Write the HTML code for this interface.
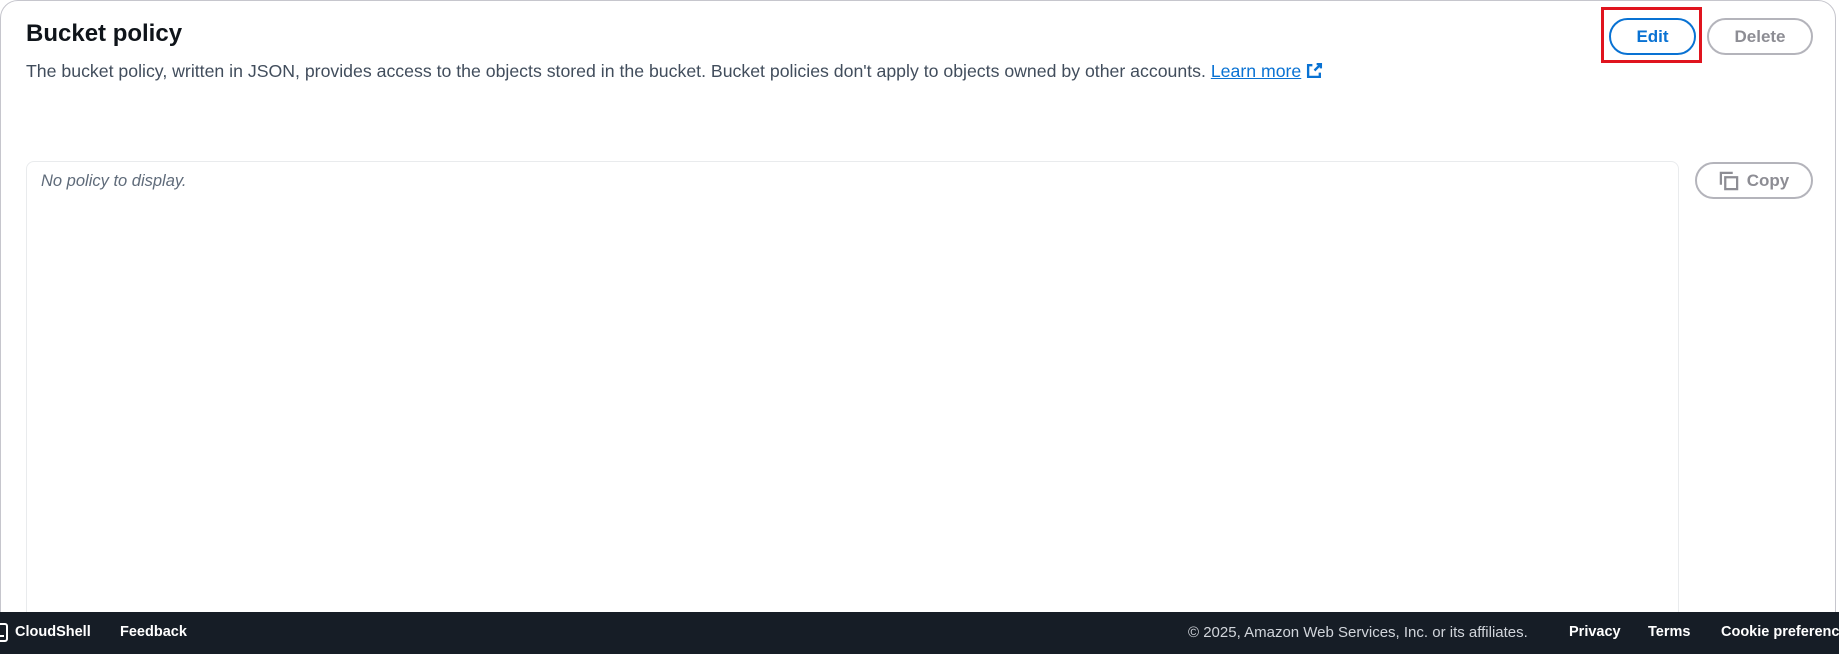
<!DOCTYPE html>
<html style="overflow:hidden;height:654px"><head><meta charset="utf-8"><style>
*{box-sizing:border-box;margin:0;padding:0}
body{width:1839px;height:654px;overflow:hidden;background:#fff;font-family:"Liberation Sans",sans-serif;position:relative;color:#16191f}
.card{position:absolute;left:0;top:0;width:1836px;height:680px;border:1px solid #c6c6cd;border-radius:18px}
h1{position:absolute;left:26px;top:20px;font-size:24px;font-weight:bold;color:#0f141a}
.desc{position:absolute;left:26px;top:61px;font-size:17.7px;color:#414d5c;white-space:nowrap}
.desc a{color:#0972d3;text-decoration:underline}
.btn{position:absolute;border-radius:20px;font-weight:bold;font-size:17px;display:flex;align-items:center;justify-content:center}
.edit{left:1609px;top:18px;width:87px;height:37px;border:2px solid #0972d3;color:#0972d3}
.del{left:1707px;top:18px;width:106px;height:37px;border:2px solid #b4b4bb;color:#8d8d94}
.copy{left:1695px;top:162px;width:118px;height:37px;border:2px solid #b4b4bb;color:#8d8d94;gap:8px}
.red{position:absolute;left:1601px;top:7px;width:101px;height:56px;border:3px solid #e0141e}
.editor{position:absolute;left:26px;top:161px;width:1653px;height:480px;border:1px solid #e9ebed;border-radius:8px}
.editor span{position:absolute;left:14px;top:10px;font-style:italic;font-size:16.5px;color:#5f6b7a}
.foot{position:absolute;left:0;top:612px;width:1839px;height:42px;background:#161d26;color:#fff;font-size:14.5px;font-weight:bold}
.foot span{position:absolute;top:12px;white-space:nowrap}
.foot .c{font-weight:normal;color:#d1d5db;font-size:15px}
</style></head><body>
<div class="card"></div>
<h1>Bucket policy</h1>
<div class="desc">The bucket policy, written in JSON, provides access to the objects stored in the bucket. Bucket policies don't apply to objects owned by other accounts. <a>Learn more</a> <svg width="17" height="17" viewBox="0 0 16 16" style="vertical-align:-2px"><path d="M10 2h4v4M14 2L8 8M6 3H2v11h11v-4" fill="none" stroke="#0972d3" stroke-width="2.2"/></svg></div>
<div class="red"></div>
<div class="btn edit">Edit</div>
<div class="btn del">Delete</div>
<div class="editor"><span>No policy to display.</span></div>
<div class="btn copy"><svg width="20" height="20" viewBox="0 0 16 16"><path d="M1.5 11V1.5H11" fill="none" stroke="#8d8d94" stroke-width="1.8"/><rect x="5" y="5" width="9.5" height="9.5" fill="none" stroke="#8d8d94" stroke-width="1.8"/></svg>Copy</div>
<div class="foot">
<span style="left:-4px;top:11px"><svg width="13" height="20" viewBox="0 0 13 20"><rect x="1" y="1" width="10" height="17" rx="2" fill="none" stroke="#fff" stroke-width="2"/><path d="M4 13h4" stroke="#fff" stroke-width="2"/></svg></span>
<span style="left:15px">CloudShell</span>
<span style="left:120px">Feedback</span>
<span class="c" style="left:1188px">© 2025, Amazon Web Services, Inc. or its affiliates.</span>
<span style="left:1569px">Privacy</span>
<span style="left:1648px">Terms</span>
<span style="left:1721px">Cookie preferences</span>
</div>
</body></html>
